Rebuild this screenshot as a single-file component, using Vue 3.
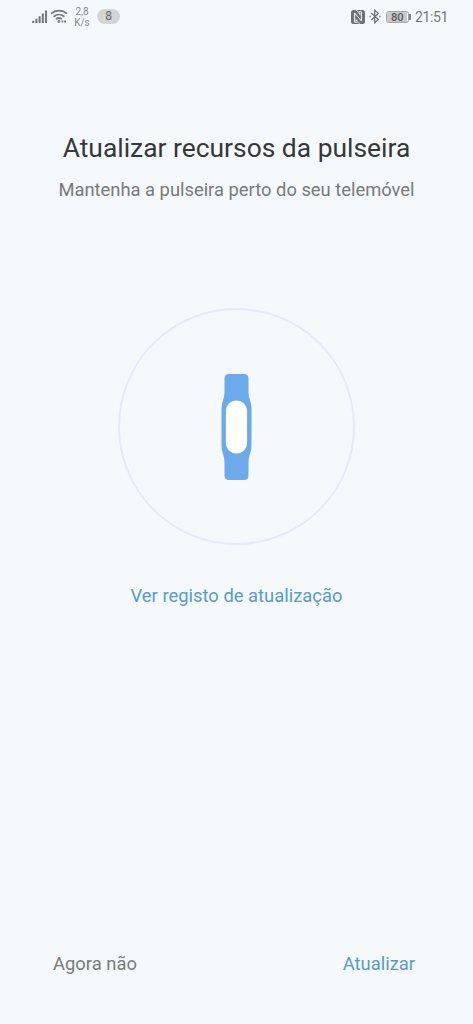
<script setup>
const network = { value: '2,8', unit: 'K/s' }
</script>

<template>
  <main class="screen">
    <header class="status">
      <div class="left">
        <svg class="signal" width="16" height="14" viewBox="0 0 16 14">
          <path d="M1.200 13v-2.200M4.400 13V8.800M7.600 13V6.200M10.800 13V3.400M14 13V.5" />
        </svg>
        <svg class="wifi" width="18" height="15" viewBox="0 0 18 15">
          <path d="M1 4.700C5.600.5 12.400.5 17 4.700M3.600 7.700c3.200-2.800 7.600-2.800 10.800 0M6 10.300c1.800-1.500 4.100-1.500 5.800-.1" />
          <circle cx="8.900" cy="12.400" r="1.400" />
          <path class="activity" d="M11.600 12.600h1.700M14.100 12.600h1.900" />
        </svg>
        <div class="speed"><span>{{ network.value }}</span><span>{{ network.unit }}</span></div>
        <span class="count">8</span>
      </div>
      <div class="right">
        <svg class="nfc" width="14" height="14" viewBox="0 0 14 14">
          <path d="M2.500 0H5L9.300 5.600V2.800H7.500L6 0h5.500Q14 0 14 2.500v9q0 2.500-2.500 2.500H9L4.700 8.400v2.800h1.800L8 14H2.500Q0 14 0 11.500v-9Q0 0 2.500 0Z" />
          <path class="groove" d="M6.600 12.200H3.600V3l6.800 8V1.800H7.400" />
        </svg>
        <svg class="bluetooth" width="12" height="15" viewBox="0 0 12 15">
          <path d="M2.200 4l7.200 6.600-3.700 3.200V1.200l3.700 3.200L2.200 11" />
          <path d="M.5 7.500h1.200M10.200 7.500h1.300" />
        </svg>
        <div class="battery"><span>80</span></div>
        <time>21:51</time>
      </div>
    </header>
    <h1>Atualizar recursos da pulseira</h1>
    <p>Mantenha a pulseira perto do seu telemóvel</p>
    <div class="ring">
      <svg width="31" height="106" viewBox="-.5 0 31 106">
        <path class="strap" d="M7.500 0h15Q27 0 27 4.500v14q0 4 1.700 8.300Q30 30.500 30 34v38q0 4-1.400 7.700Q27 84 27 88v13.500q0 4.500-4.500 4.500h-15Q3 106 3 101.500V88q0-4-1.600-8.300Q0 76 0 72V34q0-3.500 1.300-7.200Q3 22.500 3 18.500v-14Q3 0 7.500 0Z" />
        <rect class="face" x="4.400" y="26.500" width="21.200" height="53" rx="10.600" />
      </svg>
    </div>
    <a class="log">Ver registo de atualização</a>
    <footer>
      <button>Agora não</button>
      <button class="primary">Atualizar</button>
    </footer>
  </main>
</template>

<style>
body { margin: 0; background: #f5f9fc; }
</style>

<style scoped>
.screen {
  box-sizing: border-box;
  width: 473px;
  height: 1024px;
  display: flex;
  flex-direction: column;
  align-items: center;
  background: #f5f9fc;
  font-family: Roboto, "Liberation Sans", sans-serif;
  color: #777b7a;
  overflow: hidden;
}
.status {
  box-sizing: border-box;
  width: 100%;
  height: 33px;
  padding: 0 25px 0 32px;
  display: flex;
  justify-content: space-between;
  align-items: center;
}
.left, .right { display: flex; align-items: center; }
svg { display: block; flex: none; fill: none; }
.signal { margin-right: 2px; stroke: #777a7c; stroke-width: 2.1; }
.wifi { stroke: #777a7c; stroke-width: 1.8; }
.wifi circle { fill: #777a7c; stroke: none; }
.wifi .activity { stroke-width: 2; }
.speed {
  width: 18px;
  margin-left: 5px;
  display: flex;
  flex-direction: column;
  align-items: center;
  font-size: 10px;
  line-height: 11px;
  color: #858889;
}
.count {
  width: 23px;
  height: 15px;
  margin-left: 6px;
  border-radius: 8px;
  background: #d3d5d7;
  text-align: center;
  font-size: 12px;
  line-height: 15px;
  color: #616466;
}
.nfc { margin-right: 4px; fill: #707375; }
.nfc .groove { fill: none; stroke: #f5f9fc; stroke-width: 1; }
.bluetooth { margin-right: 5px; stroke: #717476; stroke-width: 1.3; }
.battery {
  position: relative;
  box-sizing: border-box;
  width: 23px;
  height: 12px;
  margin-right: 6px;
  padding: 0;
  border: 1px solid #a2a5a7;
  border-radius: 2.5px;
}
.battery span {
  display: block;
  width: 19px;
  height: 10px;
  padding-left: 1px;
  background: #c9cbcd;
  font-size: 11px;
  font-weight: 500;
  line-height: 11px;
  text-align: center;
  color: #55585a;
}
.battery::after {
  content: "";
  position: absolute;
  right: -3px;
  top: 2px;
  width: 1.5px;
  height: 6px;
  background: #808385;
}
time { font-size: 14px; line-height: 16px; color: #747779; letter-spacing: -.35px; }
h1 {
  margin: 99px 0 0;
  font-size: 26.4px;
  font-weight: 400;
  line-height: 32px;
  color: #353839;
  white-space: nowrap;
}
p { margin: 14px 0 0; font-size: 18.35px; line-height: 24px; white-space: nowrap; }
.ring {
  box-sizing: border-box;
  width: 237px;
  height: 237px;
  margin-top: 106px;
  border: 2px solid #e5ebf6;
  border-radius: 50%;
  display: flex;
  align-items: center;
  justify-content: center;
}
.strap { fill: #6caaec; }
.face { fill: #fff; }
.log { margin-top: 39px; font-size: 18.4px; line-height: 24px; color: #559bd0; white-space: nowrap; }
footer {
  box-sizing: border-box;
  width: 100%;
  margin-top: auto;
  padding: 0 58px 48px 53px;
  display: flex;
  justify-content: space-between;
}
button {
  padding: 0;
  border: 0;
  background: none;
  font: 18.4px/24px Roboto, "Liberation Sans", sans-serif;
  color: #777b7a;
}
.primary { color: #559bd0; }
</style>
